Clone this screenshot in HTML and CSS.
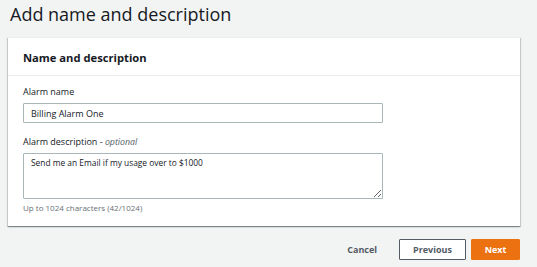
FILE: index.html
```html
<!DOCTYPE html>
<html>
<head>
<meta charset="utf-8">
<link rel="stylesheet" href="styles.css">
</head>
<body>
<div class="page">
  <h1 class="title">Add name and description</h1>
  <div class="card">
    <div class="card-header">Name and description</div>
    <div class="card-body">
      <div class="field">
        <label class="label">Alarm name</label>
        <input class="input" type="text" value="Billing Alarm One">
      </div>
      <div class="field">
        <label class="label">Alarm description - <i>optional</i></label>
        <textarea class="textarea">Send me an Email if my usage over to $1000</textarea>
        <div class="hint">Up to 1024 characters (42/1024)</div>
      </div>
    </div>
  </div>
  <div class="actions">
    <button class="btn btn-link">Cancel</button>
    <button class="btn btn-normal">Previous</button>
    <button class="btn btn-primary">Next</button>
  </div>
</div>
</body>
</html>
```
FILE: styles.css
```css
html, body {
  margin: 0;
  padding: 0;
  background: #f2f3f3;
  font-family: "Open Sans", "Noto Sans", sans-serif;
  color: #16191f;
}
.page {
  padding: 0 17px 0 8px;
}
.title {
  margin: 0;
  padding: 2px 0 0 2px;
  height: 35px;
  font-size: 18px;
  font-weight: 400;
  line-height: 24px;
  color: #16191f;
}
.card {
  background: #fff;
  box-shadow: 0 1px 1px 0 rgba(0,28,36,0.3), 1px 1px 1px 0 rgba(0,28,36,0.15), -1px 1px 1px 0 rgba(0,28,36,0.15);
  border-top: 1px solid #eaeded;
}
.card-header {
  height: 38px;
  box-sizing: border-box;
  border-bottom: 1px solid #eaeded;
  padding: 11px 15px 0;
  font-size: 11.2px;
  font-weight: 700;
  line-height: 17px;
}
.card-body {
  padding: 9px 15px 12px;
}
.field {
  display: flex;
  flex-direction: column;
  align-items: flex-start;
}
.field + .field {
  margin-top: 12px;
}
.label {
  font-size: 9px;
  line-height: 14px;
  color: #16191f;
  margin-bottom: 4px;
}
.label i {
  color: #545b64;
  font-size: 8.8px;
}
.input, .textarea {
  box-sizing: border-box;
  width: 360px;
  border: 1px solid #aab7b8;
  border-radius: 1px;
  font-family: "Open Sans", "Noto Sans", sans-serif;
  font-size: 9px;
  color: #16191f;
  padding: 2px 7px;
  margin: 0;
  background: #fff;
  outline: none;
}
.input {
  height: 20px;
}
.textarea {
  height: 46px;
  resize: vertical;
  font-size: 8.4px;
  line-height: 13px;
  padding-top: 2px;
}
.hint {
  font-size: 8px;
  color: #687078;
  line-height: 12px;
  margin-top: 3px;
}
.actions {
  display: flex;
  justify-content: flex-end;
  align-items: center;
  gap: 5px;
  margin-top: 13px;
}
.btn {
  font-family: "Open Sans", "Noto Sans", sans-serif;
  font-size: 9px;
  font-weight: 700;
  height: 21px;
  box-sizing: border-box;
  border-radius: 1px;
  cursor: pointer;
  padding: 0 10px;
}
.btn-link {
  background: transparent;
  border: 1px solid transparent;
  color: #545b64;
  margin-right: 6px;
}
.btn-normal {
  background: #fff;
  border: 1px solid #545b64;
  color: #545b64;
  width: 67px;
}
.btn-primary {
  background: #ec7211;
  border: 1px solid #ec7211;
  color: #fff;
  width: 49px;
}
```
